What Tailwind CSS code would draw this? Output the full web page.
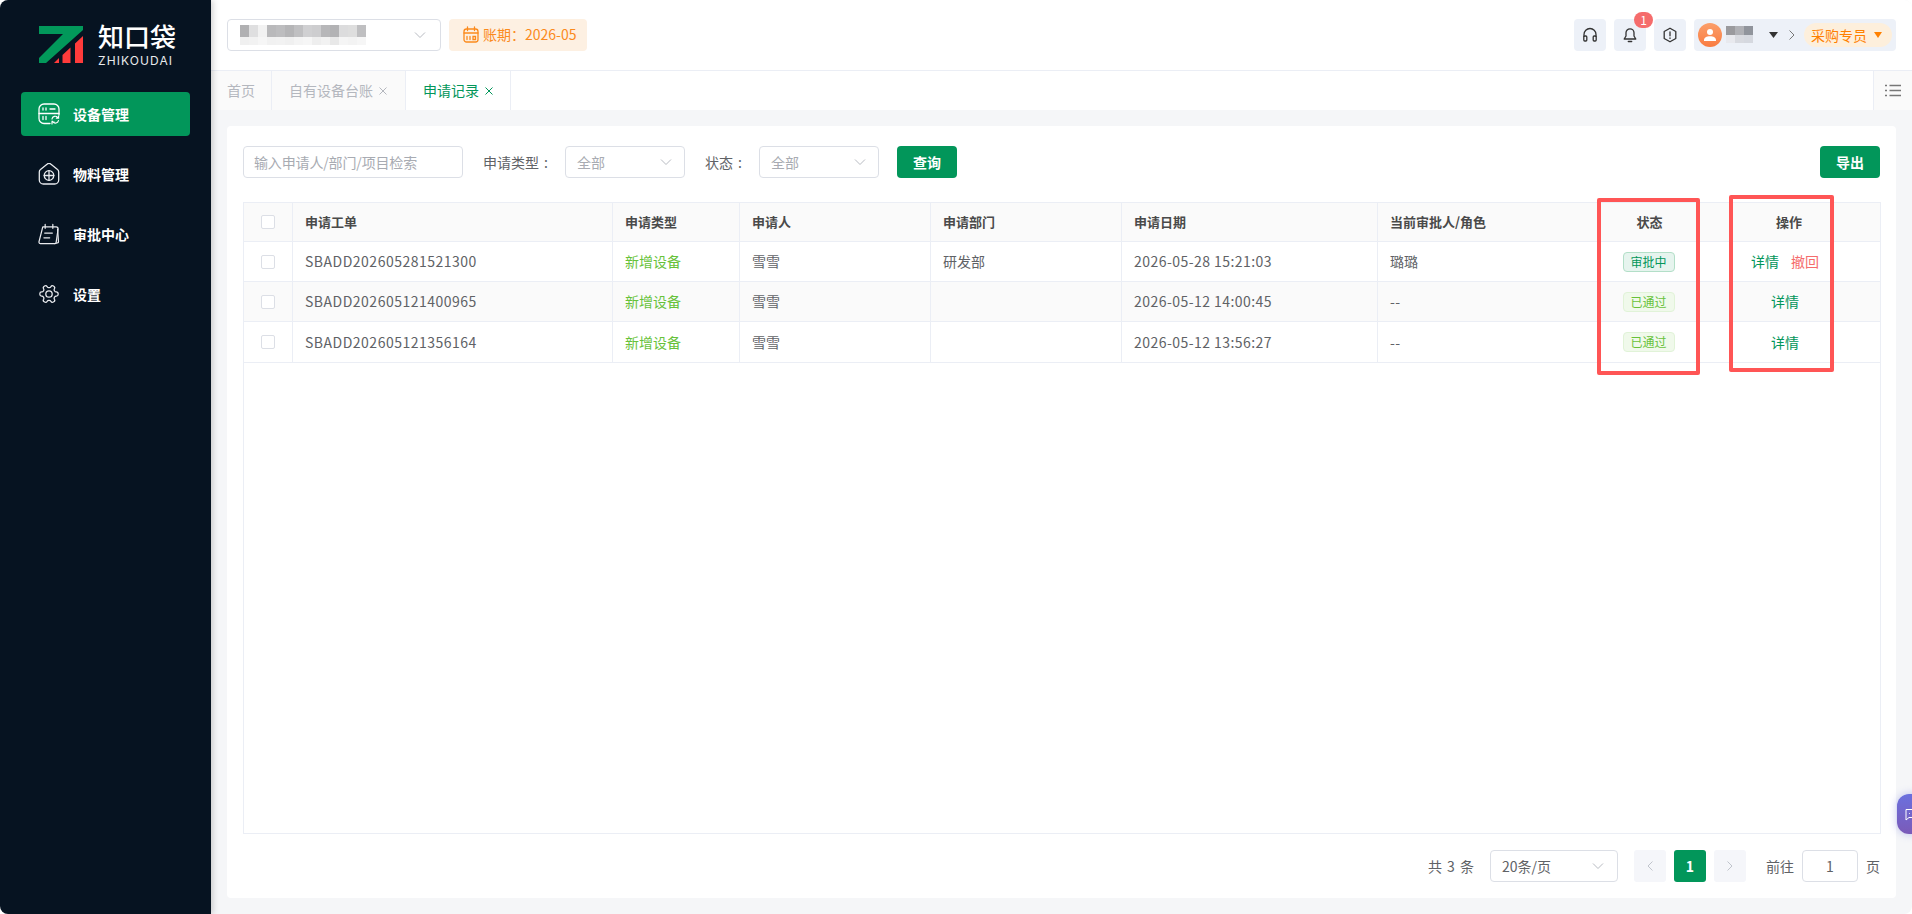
<!DOCTYPE html>
<html lang="zh-CN">
<head>
<meta charset="utf-8">
<title>申请记录</title>
<script src="https://cdn.jsdelivr.net/npm/@tailwindcss/browser@4"></script>
</head>
<body class="bg-white">
<div class="relative flex w-[1912px] h-[914px] overflow-hidden rounded-[8px] font-['Noto_Sans_CJK_SC',sans-serif] text-[14px] text-[#606266]">

  <!-- Sidebar -->
  <aside class="relative z-10 w-[211px] shrink-0 bg-[#061321] shadow-[2px_0_6px_rgba(0,0,0,0.18)] flex flex-col">
    <div class="h-[92px] pt-[26px] pl-[39px] flex items-start">
      <svg width="44" height="37" viewBox="39 26 44 37" class="shrink-0">
        <polygon fill="#02985a" points="39,26 83,26 83,30 46,63 39,63 39,58 63,34 39,34"/>
        <polygon fill="#ff3b3b" points="54,63 59,58 59,63"/>
        <polygon fill="#ff3b3b" points="62.5,55 70.5,47.5 70.5,63 62.5,63"/>
        <polygon fill="#ff3b3b" points="75,43.5 83,36 83,63 75,63"/>
      </svg>
      <div class="ml-[15px] w-[80px] text-white">
        <div class="font-['Liberation_Sans','Noto_Sans_CJK_SC',sans-serif] text-[26px] leading-[24px] font-medium">知口袋</div>
        <div class="mt-[5px] font-['Inter',sans-serif] text-[12px] leading-[12px] tracking-[1.1px] text-[#e8eaec] whitespace-nowrap">ZHIKOUDAI</div>
      </div>
    </div>
    <nav class="px-[21px] flex flex-col gap-[16px] font-bold text-white">
      <a class="h-[44px] w-[169px] rounded-[4px] bg-[#02965a] flex items-center pl-[17px] gap-[13px]">
        <svg width="22" height="22" viewBox="0 0 22 22" fill="none" stroke="#fff" stroke-width="1.3" stroke-linecap="round"><path d="M12 20.5H6a5 5 0 0 1-5-5V6a5 5 0 0 1 5-5h10a5 5 0 0 1 5 5v6"/><path d="M1 10.5h20"/><path d="M5 5v2M8 5v2M12 6h5M5 13.5v3M8 13.500v3"/><path d="M14 16a3.2 3.2 0 0 1 5.600-1.600l.9.8M20.600 13v2.200h-2.200M20.500 17.500a3.2 3.2 0 0 1-5.600 1.400l-.8-.8M14 21v-2h2.200" stroke-width="1.200"/></svg>
        <span>设备管理</span>
      </a>
      <a class="h-[44px] flex items-center pl-[17px] gap-[13px]">
        <svg width="22" height="22" viewBox="0 0 22 22" fill="none" stroke="#e8eaee" stroke-width="1.3" stroke-linecap="round" stroke-linejoin="round"><path d="M9 1.300a3 3 0 0 1 4 0l6.500 5.200a3 3 0 0 1 1.200 2.400V17a4 4 0 0 1-4 4H5.300a4 4 0 0 1-4-4V8.900a3 3 0 0 1 1.200-2.400z"/><circle cx="11" cy="12.500" r="4.800"/><path d="M11 7.700v9.600M6.200 12.500h9.600"/></svg>
        <span>物料管理</span>
      </a>
      <a class="h-[44px] flex items-center pl-[17px] gap-[13px]">
        <svg width="22" height="22" viewBox="0 0 23 22" fill="none" stroke="#e8eaee" stroke-width="1.3" stroke-linecap="round" stroke-linejoin="round"><path d="M5 3.500h14a2 2 0 0 1 2 2.300l-2 14a1.500 1.500 0 0 1-1.500 1.200H2.500A1.500 1.500 0 0 1 1 19.300z"/><path d="M17.500 21c1.500 0 2.500-.8 3-.8.700 0 1-.5.900-1.300L20.500 6"/><path d="M7.500 1v4M15.500 1v4M7 10h8M6.200 15h6"/></svg>
        <span>审批中心</span>
      </a>
      <a class="h-[44px] flex items-center pl-[17px] gap-[13px]">
        <svg width="22" height="22" viewBox="0 0 24 24" fill="none" stroke="#e8eaee" stroke-width="1.400" stroke-linecap="round" stroke-linejoin="round"><g transform="rotate(90 12 12)"><path d="M12.220 2h-.44a2 2 0 0 0-2 2v.18a2 2 0 0 1-1 1.730l-.43.250a2 2 0 0 1-2 0l-.15-.08a2 2 0 0 0-2.730.730l-.22.380a2 2 0 0 0 .730 2.730l.15.100a2 2 0 0 1 1 1.720v.510a2 2 0 0 1-1 1.740l-.15.090a2 2 0 0 0-.730 2.730l.22.380a2 2 0 0 0 2.730.730l.15-.08a2 2 0 0 1 2 0l.43.250a2 2 0 0 1 1 1.730V20a2 2 0 0 0 2 2h.44a2 2 0 0 0 2-2v-.18a2 2 0 0 1 1-1.730l.43-.25a2 2 0 0 1 2 0l.15.080a2 2 0 0 0 2.730-.730l.22-.390a2 2 0 0 0-.730-2.730l-.15-.08a2 2 0 0 1-1-1.740v-.5a2 2 0 0 1 1-1.740l.15-.09a2 2 0 0 0 .730-2.730l-.22-.38a2 2 0 0 0-2.730-.730l-.15.080a2 2 0 0 1-2 0l-.43-.25a2 2 0 0 1-1-1.730V4a2 2 0 0 0-2-2z"/><circle cx="12" cy="12" r="3.500"/></g></svg>
        <span>设置</span>
      </a>
    </nav>
  </aside>

  <!-- Main -->
  <main class="flex-1 min-w-0 flex flex-col bg-[#f5f6f8]">
    <!-- Header -->
    <header class="h-[71px] shrink-0 bg-white border-b border-[#ebeef5] flex items-center pl-[16px] pr-[16px] pb-[1px]">
      <div class="w-[214px] h-[32px] rounded-[4px] border border-[#dcdfe6] flex items-center pl-[12px] pr-[14px] justify-between">
        <div class="flex flex-col">
          <div class="flex h-[12px]">
            <i class="w-[9px] bg-[#b0b0b2]"></i><i class="w-[9px] bg-[#dfdfe0]"></i><i class="w-[9px] bg-[#f2f2f2]"></i><i class="w-[9px] bg-[#b9b9bb]"></i><i class="w-[9px] bg-[#bdbdbf]"></i><i class="w-[9px] bg-[#b5b5b7]"></i><i class="w-[9px] bg-[#c0c0c2]"></i><i class="w-[9px] bg-[#d0d0d2]"></i><i class="w-[9px] bg-[#cdcdcf]"></i><i class="w-[9px] bg-[#b7b7b9]"></i><i class="w-[9px] bg-[#b2b2b4]"></i><i class="w-[9px] bg-[#dcdcdd]"></i><i class="w-[9px] bg-[#dedede]"></i><i class="w-[9px] bg-[#bfbfc1]"></i>
          </div>
          <div class="flex h-[8px]">
            <i class="w-[9px] bg-[#f0f0f0]"></i><i class="w-[9px] bg-[#f2f2f2]"></i><i class="w-[9px] bg-[#f6f6f6]"></i><i class="w-[9px] bg-[#f1f1f1]"></i><i class="w-[9px] bg-[#f2f2f2]"></i><i class="w-[9px] bg-[#f0f0f0]"></i><i class="w-[9px] bg-[#f4f4f4]"></i><i class="w-[9px] bg-[#f6f6f6]"></i><i class="w-[9px] bg-[#eeeeee]"></i><i class="w-[9px] bg-[#f2f2f2]"></i><i class="w-[9px] bg-[#e8e8e8]"></i><i class="w-[9px] bg-[#f5f5f5]"></i><i class="w-[9px] bg-[#f3f3f3]"></i><i class="w-[9px] bg-[#f6f6f6]"></i>
          </div>
        </div>
        <svg width="12" height="12" viewBox="0 0 12 12" fill="none" stroke="#b8bbc2" stroke-width="1"><path d="M1 3.500l5 5 5-5"/></svg>
      </div>
      <div class="ml-[8px] w-[138px] h-[32px] rounded-[4px] bg-[#fdf0e2] text-[#fb8a1c] flex items-center pl-[14px] gap-[4px]">
        <svg width="16" height="17" viewBox="0 0 16 17" fill="none" stroke="#fb8a1c" stroke-width="1.300" stroke-linecap="round"><rect x="1" y="3" width="14" height="13" rx="2.500"/><path d="M1 7h14M4.500 1v3.500M11.500 1v3.500M4 10.500v3M7 10.500v3M10 10.500h2.500v3H10z"/></svg>
        <span>账期：2026-05</span>
      </div>
      <div class="ml-auto flex items-center gap-[8px]">
        <div class="w-[32px] h-[32px] rounded-[4px] bg-[#edf1f8] flex items-center justify-center">
          <svg width="16" height="16" viewBox="0 0 16 16" fill="none" stroke="#333" stroke-width="1.300"><path d="M2 10V7.500a6 6 0 0 1 12 0V10"/><rect x="1.800" y="9" width="3" height="5" rx="1"/><rect x="11.200" y="9" width="3" height="5" rx="1"/></svg>
        </div>
        <div class="relative w-[32px] h-[32px] rounded-[4px] bg-[#edf1f8] flex items-center justify-center">
          <svg width="16" height="16" viewBox="0 0 16 16" fill="none" stroke="#333" stroke-width="1.300" stroke-linejoin="round" stroke-linecap="round"><path d="M8 1.800a4 4 0 0 1 4 4V9l1.800 3H2.200L4 9V5.800a4 4 0 0 1 4-4z"/><path d="M6.300 14.500h3.400"/></svg>
          <span class="absolute left-[20px] top-[-7px] w-[19px] h-[16px] rounded-full bg-[#f56c6c] text-white text-[12px] leading-[16px] text-center">1</span>
        </div>
        <div class="w-[32px] h-[32px] rounded-[4px] bg-[#edf1f8] flex items-center justify-center">
          <svg width="16" height="16" viewBox="0 0 16 16" fill="none" stroke="#333" stroke-width="1.300" stroke-linejoin="round" stroke-linecap="round"><path d="M8 1.200l5.800 3.300v7L8 14.800 2.200 11.500v-7z"/><path d="M8 4.800v4M8 10.800v.6"/></svg>
        </div>
        <div class="w-[202px] h-[32px] rounded-[4px] bg-[#edf1f8] flex items-center pl-[4px]">
          <div class="w-[24px] h-[24px] rounded-full bg-gradient-to-b from-[#fb9f6b] to-[#f97b3f] flex items-center justify-center">
            <svg width="14" height="14" viewBox="0 0 14 14" fill="#fff"><circle cx="7" cy="4" r="3"/><path d="M1 13v-.800C1 9.800 3.500 8.300 7 8.300s6 1.500 6 3.900v.800z"/></svg>
          </div>
          <div class="ml-[4px] flex flex-col">
            <div class="flex h-[9px]"><i class="w-[9px] bg-[#9a9a9e]"></i><i class="w-[9px] bg-[#afb0b5]"></i><i class="w-[9px] bg-[#90949c]"></i></div>
            <div class="flex h-[8px]"><i class="w-[9px] bg-[#e8e9ee]"></i><i class="w-[9px] bg-[#d8dae0]"></i><i class="w-[9px] bg-[#d5d8df]"></i></div>
          </div>
          <svg class="ml-[16px]" width="9" height="6" viewBox="0 0 9 6" fill="#333"><path d="M0 0h9L4.500 6z"/></svg>
          <svg class="ml-[11px]" width="6" height="10" viewBox="0 0 6 10" fill="none" stroke="#777" stroke-width="1"><path d="M.5.500L5 5 .5 9.500"/></svg>
          <div class="ml-[9px] w-[88px] h-[24px] rounded-full bg-[#fdefdc] text-[#ff8000] flex items-center pl-[7px] gap-[7px]">
            <span class="leading-[24px]">采购专员</span>
            <svg width="8" height="6" viewBox="0 0 8 6" fill="#ff8000"><path d="M0 0h8L4 6z"/></svg>
          </div>
        </div>
      </div>
    </header>

    <!-- Tabs -->
    <div class="h-[39px] shrink-0 bg-white flex items-stretch">
      <div class="w-[61px] pl-[16px] bg-[#fafafa] border-r border-[#ebeef5] text-[#b4b7be] flex items-center">首页</div>
      <div class="w-[134px] pl-[17px] bg-[#fafafa] border-r border-[#ebeef5] text-[#b4b7be] flex items-center gap-[6px]">
        <span>自有设备台账</span>
        <svg width="8" height="8" viewBox="0 0 8 8" stroke="#b4b7be" stroke-width="1"><path d="M.5.500l7 7M7.500.500l-7 7"/></svg>
      </div>
      <div class="w-[105px] pl-[17px] border-r border-[#ebeef5] text-[#02965a] flex items-center gap-[6px]">
        <span>申请记录</span>
        <svg width="8" height="8" viewBox="0 0 8 8" stroke="#02965a" stroke-width="1"><path d="M.5.500l7 7M7.500.500l-7 7"/></svg>
      </div>
      <div class="flex-1"></div>
      <div class="w-[39px] bg-[#fafafa] border-l border-[#ebeef5] flex items-center justify-center">
        <svg width="16" height="13" viewBox="0 0 16 13" fill="none" stroke="#777" stroke-width="1.500"><path d="M4.500 1.500H16M4.500 6.500H16M4.500 11.500H16M0 1.500h2M0 6.500h2M0 11.500h2"/></svg>
      </div>
    </div>

    <!-- Card -->
    <section class="ml-[16px] mt-[16px] w-[1669px] h-[772px] bg-white rounded-[4px] pl-[16px] pr-[16px] pt-[20px] flex flex-col">
      <div class="h-[32px] flex items-center shrink-0">
        <div class="w-[220px] h-[32px] rounded-[4px] border border-[#dcdfe6] pl-[10px] flex items-center text-[#a8abb2] tracking-[-0.15px]">输入申请人/部门/项目检索</div>
        <span class="ml-[20px] w-[82px]">申请类型<span class="ml-[5px]">:</span></span>
        <div class="w-[120px] h-[32px] rounded-[4px] border border-[#dcdfe6] pl-[11px] pr-[12px] flex items-center justify-between text-[#a8abb2]">
          <span>全部</span>
          <svg width="12" height="12" viewBox="0 0 12 12" fill="none" stroke="#b8bbc2" stroke-width="1"><path d="M1 3.500l5 5 5-5"/></svg>
        </div>
        <span class="ml-[20px] w-[54px]">状态<span class="ml-[5px]">:</span></span>
        <div class="w-[120px] h-[32px] rounded-[4px] border border-[#dcdfe6] pl-[11px] pr-[12px] flex items-center justify-between text-[#a8abb2]">
          <span>全部</span>
          <svg width="12" height="12" viewBox="0 0 12 12" fill="none" stroke="#b8bbc2" stroke-width="1"><path d="M1 3.500l5 5 5-5"/></svg>
        </div>
        <button class="ml-[18px] w-[60px] h-[32px] rounded-[4px] bg-[#02965a] text-white font-bold">查询</button>
        <button class="ml-auto w-[60px] h-[32px] rounded-[4px] bg-[#02965a] text-white font-bold">导出</button>
      </div>

      <div class="mt-[24px] w-[1638px] h-[632px] border border-[#ebeef5] shrink-0 overflow-hidden">
        <table class="table-fixed border-separate border-spacing-0 w-[1636px]">
          <thead>
            <tr class="h-[39px] bg-[#fafafa] text-[#4a4a4a] text-[13px] text-left">
              <th class="w-[49px] border-r border-b border-[#ebeef5]"><div class="mx-auto w-[14px] h-[14px] rounded-[2px] border border-[#dcdfe6] bg-white"></div></th>
              <th class="w-[320px] pl-[12px] border-r border-b border-[#ebeef5] font-bold">申请工单</th>
              <th class="w-[127px] pl-[12px] border-r border-b border-[#ebeef5] font-bold">申请类型</th>
              <th class="w-[191px] pl-[12px] border-r border-b border-[#ebeef5] font-bold">申请人</th>
              <th class="w-[191px] pl-[12px] border-r border-b border-[#ebeef5] font-bold">申请部门</th>
              <th class="w-[256px] pl-[12px] border-r border-b border-[#ebeef5] font-bold">申请日期</th>
              <th class="w-[220px] pl-[12px] border-r border-b border-[#ebeef5] font-bold">当前审批人/角色</th>
              <th class="w-[100px] pl-[4px] border-r border-b border-[#ebeef5] text-center font-bold">状态</th>
              <th class="w-[182px] border-b border-[#ebeef5] text-center font-bold">操作</th>
            </tr>
          </thead>
          <tbody>
            <tr class="h-[40px]">
              <td class="border-r border-b border-[#ebeef5]"><div class="mx-auto w-[14px] h-[14px] rounded-[2px] border border-[#dcdfe6] bg-white"></div></td>
              <td class="pl-[12px] border-r border-b border-[#ebeef5] tracking-[0.5px]">SBADD202605281521300</td>
              <td class="pl-[12px] border-r border-b border-[#ebeef5] text-[#67c23a]">新增设备</td>
              <td class="pl-[12px] border-r border-b border-[#ebeef5]">雪雪</td>
              <td class="pl-[12px] border-r border-b border-[#ebeef5]">研发部</td>
              <td class="pl-[12px] border-r border-b border-[#ebeef5] tracking-[0.45px]">2026-05-28 15:21:03</td>
              <td class="pl-[12px] border-r border-b border-[#ebeef5]">璐璐</td>
              <td class="pl-[2px] border-r border-b border-[#ebeef5]"><div class="mx-auto w-[52px] h-[20px] rounded-[4px] border border-[#b3dfc8] bg-[#e6f4ee] text-[#02965a] text-[12px] leading-[18px] text-center">审批中</div></td>
              <td class="pr-[8px] border-b border-[#ebeef5] text-center"><span class="text-[#02965a]">详情</span><span class="ml-[12px] text-[#f56c6c]">撤回</span></td>
            </tr>
            <tr class="h-[40px] bg-[#fafafa]">
              <td class="border-r border-b border-[#ebeef5]"><div class="mx-auto w-[14px] h-[14px] rounded-[2px] border border-[#dcdfe6] bg-white"></div></td>
              <td class="pl-[12px] border-r border-b border-[#ebeef5] tracking-[0.5px]">SBADD202605121400965</td>
              <td class="pl-[12px] border-r border-b border-[#ebeef5] text-[#67c23a]">新增设备</td>
              <td class="pl-[12px] border-r border-b border-[#ebeef5]">雪雪</td>
              <td class="pl-[12px] border-r border-b border-[#ebeef5]"></td>
              <td class="pl-[12px] border-r border-b border-[#ebeef5] tracking-[0.45px]">2026-05-12 14:00:45</td>
              <td class="pl-[12px] border-r border-b border-[#ebeef5] tracking-[0.5px]">--</td>
              <td class="pl-[2px] border-r border-b border-[#ebeef5]"><div class="mx-auto w-[52px] h-[20px] rounded-[4px] border border-[#e1f3d8] bg-[#f0f9eb] text-[#67c23a] text-[12px] leading-[18px] text-center">已通过</div></td>
              <td class="pr-[8px] border-b border-[#ebeef5] text-center"><span class="text-[#02965a]">详情</span></td>
            </tr>
            <tr class="h-[41px]">
              <td class="border-r border-b border-[#ebeef5]"><div class="mx-auto w-[14px] h-[14px] rounded-[2px] border border-[#dcdfe6] bg-white"></div></td>
              <td class="pl-[12px] border-r border-b border-[#ebeef5] tracking-[0.5px]">SBADD202605121356164</td>
              <td class="pl-[12px] border-r border-b border-[#ebeef5] text-[#67c23a]">新增设备</td>
              <td class="pl-[12px] border-r border-b border-[#ebeef5]">雪雪</td>
              <td class="pl-[12px] border-r border-b border-[#ebeef5]"></td>
              <td class="pl-[12px] border-r border-b border-[#ebeef5] tracking-[0.45px]">2026-05-12 13:56:27</td>
              <td class="pl-[12px] border-r border-b border-[#ebeef5] tracking-[0.5px]">--</td>
              <td class="pl-[2px] border-r border-b border-[#ebeef5]"><div class="mx-auto w-[52px] h-[20px] rounded-[4px] border border-[#e1f3d8] bg-[#f0f9eb] text-[#67c23a] text-[12px] leading-[18px] text-center">已通过</div></td>
              <td class="pr-[8px] border-b border-[#ebeef5] text-center"><span class="text-[#02965a]">详情</span></td>
            </tr>
          </tbody>
        </table>
      </div>

      <!-- Pagination -->
      <div class="mt-[16px] h-[32px] flex items-center justify-end shrink-0 w-[1637px]">
        <span class="[word-spacing:2px]">共 3 条</span>
        <div class="ml-[16px] w-[128px] h-[32px] rounded-[4px] border border-[#dcdfe6] pl-[11px] pr-[13px] flex items-center justify-between">
          <span>20条/页</span>
          <svg width="12" height="12" viewBox="0 0 12 12" fill="none" stroke="#b8bbc2" stroke-width="1"><path d="M1 3.500l5 5 5-5"/></svg>
        </div>
        <div class="ml-[16px] w-[32px] h-[32px] rounded-[3px] bg-[#f5f6fa] flex items-center justify-center">
          <svg width="6" height="10" viewBox="0 0 6 10" fill="none" stroke="#c0c4cc" stroke-width="1"><path d="M5.500.500L1 5l4.500 4.500"/></svg>
        </div>
        <div class="ml-[8px] w-[32px] h-[32px] rounded-[3px] bg-[#02965a] text-white font-bold flex items-center justify-center">1</div>
        <div class="ml-[8px] w-[32px] h-[32px] rounded-[3px] bg-[#f5f6fa] flex items-center justify-center">
          <svg width="6" height="10" viewBox="0 0 6 10" fill="none" stroke="#c0c4cc" stroke-width="1"><path d="M.5.500L5 5 .5 9.500"/></svg>
        </div>
        <span class="ml-[20px]">前往</span>
        <div class="ml-[8px] w-[56px] h-[32px] rounded-[4px] border border-[#dcdfe6] flex items-center justify-center">1</div>
        <span class="ml-[8px]">页</span>
      </div>
    </section>
  </main>

  <!-- Annotation boxes drawn over the table -->
  <div class="absolute z-20 left-[1597px] top-[198px] w-[103px] h-[177px] border-[4px] border-[#ff5555] rounded-[2px]"></div>
  <div class="absolute z-20 left-[1729px] top-[195px] w-[105px] h-[177px] border-[4px] border-[#ff5555] rounded-[2px]"></div>

  <!-- Floating chat button -->
  <div class="absolute z-20 left-[1897px] top-[794px] w-[30px] h-[40px] rounded-l-[12px] bg-gradient-to-b from-[#6a70de] to-[#7a5ab8] shadow-[0_0_8px_rgba(106,112,222,0.4)] flex items-center pl-[8px]">
    <svg width="12" height="13" viewBox="0 0 12 13" fill="none" stroke="#fff" stroke-width="1"><path d="M1 1.500h11v8H4l-3 2.500z"/><path d="M4 5.500h.8M7 5.500h.8" /></svg>
  </div>
</div>
</body>
</html>
